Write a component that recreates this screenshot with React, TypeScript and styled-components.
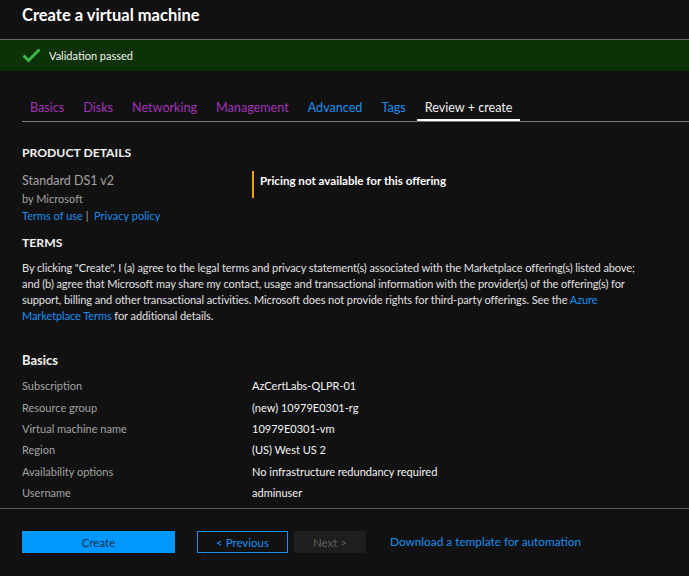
import React from 'react';
import styled, { createGlobalStyle } from 'styled-components';

const GlobalStyle = createGlobalStyle`
  * {
    margin: 0;
    padding: 0;
    box-sizing: border-box;
  }
  body {
    background: #111111;
    font-family: Lato, "Open Sans", sans-serif;
    color: #e6e6e6;
  }
`;

const Page = styled.div`
  display: flex;
  flex-direction: column;
  width: 689px;
  height: 576px;
  overflow: hidden;
  background: #111111;
`;

const Header = styled.div`
  height: 40px;
  padding: 5px 0 0 22px;
  border-bottom: 1px solid #6a6a6a;
`;

const Title = styled.h1`
  font-size: 16.5px;
  line-height: 20px;
  font-weight: 700;
  color: #ffffff;
`;

const Banner = styled.div`
  display: flex;
  align-items: center;
  gap: 8px;
  height: 31px;
  padding-left: 22px;
  background: #0d3207;
  font-size: 11px;
  color: #f2f2f2;
`;

const Tabs = styled.div`
  display: flex;
  margin: 22px 0 0 22px;
  border-bottom: 1px solid #7a7a7a;
`;

const Tab = styled.div<{ $tone: 'visited' | 'link' | 'active' }>`
  padding: 0 8px;
  margin-right: 3px;
  height: 28px;
  line-height: 29px;
  font-size: 12.6px;
  border-bottom: 2px solid ${(p) => (p.$tone === 'active' ? '#ffffff' : 'transparent')};
  color: ${(p) => (p.$tone === 'visited' ? '#a334b8' : p.$tone === 'link' ? '#1a8fef' : '#f0f0f0')};
`;

const Content = styled.div`
  padding: 22px 22px 0 22px;
  flex: 1;
`;

const SectionTitle = styled.h2<{ $top?: number; $caps?: boolean }>`
  font-size: ${(p) => (p.$caps ? 12.2 : 13)}px;
  line-height: 18px;
  font-weight: 700;
  color: #f2f2f2;
  margin-top: ${(p) => p.$top ?? 0}px;
`;

const ProductRow = styled.div`
  display: grid;
  grid-template-columns: 230px 1fr;
  margin-top: 8px;
`;

const ProductInfo = styled.div`
  display: flex;
  flex-direction: column;
`;

const ProductName = styled.div`
  font-size: 12.5px;
  line-height: 19px;
  padding-top: 1px;
  color: #a3a3a3;
`;

const Publisher = styled.div`
  font-size: 11px;
  line-height: 17px;
  color: #a3a3a3;
`;

const LinkLine = styled.div`
  font-size: 11px;
  line-height: 17px;
  color: #a3a3a3;
`;

const Link = styled.a`
  color: #1a8fef;
  text-decoration: none;
`;

const Pricing = styled.div`
  align-self: start;
  margin-top: 1px;
  height: 27px;
  padding: 3px 0 0 6px;
  line-height: 14px;
  border-left: 2px solid #f7a10a;
  font-size: 11.6px;
  font-weight: 700;
  color: #ffffff;
`;

const Paragraph = styled.p`
  margin-top: 8px;
  font-size: 11px;
  letter-spacing: -0.08px;
  line-height: 16px;
  color: #e2e2e2;
`;

const Line = styled.span`
  display: block;
  white-space: nowrap;
`;

const Rows = styled.div`
  margin-top: 6px;
`;

const Row = styled.div`
  display: grid;
  grid-template-columns: 230px 1fr;
  height: 21.4px;
  align-items: center;
  font-size: 11px;
`;

const Label = styled.span`
  color: #a3a3a3;
`;

const Value = styled.span`
  color: #f5f5f5;
`;

const Footer = styled.div`
  display: flex;
  align-items: flex-start;
  height: 68px;
  padding: 22px 22px 0;
  border-top: 1px solid #5a5a5a;
`;

const Button = styled.button<{ $kind: 'primary' | 'outline' | 'disabled' }>`
  height: 22px;
  font-family: inherit;
  font-size: 11.5px;
  cursor: pointer;
  border: 1px solid ${(p) => (p.$kind === 'outline' ? '#1a8fef' : 'transparent')};
  background: ${(p) =>
    p.$kind === 'primary' ? '#0097ff' : p.$kind === 'disabled' ? '#1e1e1e' : 'transparent'};
  color: ${(p) => (p.$kind === 'primary' ? '#17304a' : p.$kind === 'outline' ? '#1a8fef' : '#5f5f5f')};
`;

const CreateButton = styled(Button)`
  width: 153px;
  margin-right: 22px;
`;

const PrevButton = styled(Button)`
  width: 91px;
  margin-right: 6px;
`;

const NextButton = styled(Button)`
  width: 72px;
  margin-right: 24px;
`;

const FooterLink = styled(Link)`
  font-size: 11.8px;
  line-height: 22px;
`;

const CheckIcon = () => (
  <svg width="19" height="15" viewBox="0 0 19 15">
    <path d="M1.5 7.5 L6.5 12.5 L17.5 1.5" fill="none" stroke="#3cb44a" strokeWidth="3" />
  </svg>
);

const basics: [string, string][] = [
  ['Subscription', 'AzCertLabs-QLPR-01'],
  ['Resource group', '(new) 10979E0301-rg'],
  ['Virtual machine name', '10979E0301-vm'],
  ['Region', '(US) West US 2'],
  ['Availability options', 'No infrastructure redundancy required'],
  ['Username', 'adminuser'],
];

const tabs: { name: string; tone: 'visited' | 'link' | 'active' }[] = [
  { name: 'Basics', tone: 'visited' },
  { name: 'Disks', tone: 'visited' },
  { name: 'Networking', tone: 'visited' },
  { name: 'Management', tone: 'visited' },
  { name: 'Advanced', tone: 'link' },
  { name: 'Tags', tone: 'link' },
  { name: 'Review + create', tone: 'active' },
];

const App: React.FC = () => {
  return (
    <Page>
      <GlobalStyle />
      <Header>
        <Title>Create a virtual machine</Title>
      </Header>
      <Banner>
        <CheckIcon />
        <span>Validation passed</span>
      </Banner>
      <Tabs>
        {tabs.map((t) => (
          <Tab key={t.name} $tone={t.tone}>
            {t.name}
          </Tab>
        ))}
      </Tabs>
      <Content>
        <SectionTitle $caps>PRODUCT DETAILS</SectionTitle>
        <ProductRow>
          <ProductInfo>
            <ProductName>Standard DS1 v2</ProductName>
            <Publisher>by Microsoft</Publisher>
            <LinkLine>
              <Link>Terms of use</Link> |&nbsp; <Link>Privacy policy</Link>
            </LinkLine>
          </ProductInfo>
          <Pricing>Pricing not available for this offering</Pricing>
        </ProductRow>
        <SectionTitle $caps $top={10}>
          TERMS
        </SectionTitle>
        <Paragraph>
          <Line>
            By clicking "Create", I (a) agree to the legal terms and privacy statement(s) associated with the
            Marketplace offering(s) listed above;
          </Line>
          <Line>
            and (b) agree that Microsoft may share my contact, usage and transactional information with the
            provider(s) of the offering(s) for
          </Line>
          <Line>
            support, billing and other transactional activities. Microsoft does not provide rights for
            third-party offerings. See the <Link>Azure</Link>
          </Line>
          <Line>
            <Link>Marketplace Terms</Link> for additional details.
          </Line>
        </Paragraph>
        <SectionTitle $top={27}>Basics</SectionTitle>
        <Rows>
          {basics.map(([k, v]) => (
            <Row key={k}>
              <Label>{k}</Label>
              <Value>{v}</Value>
            </Row>
          ))}
        </Rows>
      </Content>
      <Footer>
        <CreateButton $kind="primary">Create</CreateButton>
        <PrevButton $kind="outline">&lt; Previous</PrevButton>
        <NextButton $kind="disabled">Next &gt;</NextButton>
        <FooterLink>Download a template for automation</FooterLink>
      </Footer>
    </Page>
  );
};

export default App;
